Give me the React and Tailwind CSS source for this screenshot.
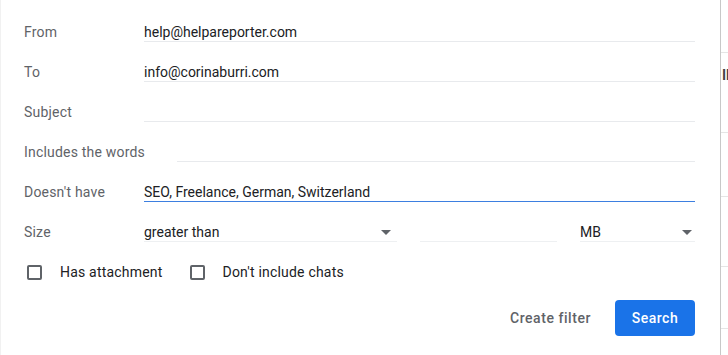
import React from 'react';

const font = { fontFamily: 'Roboto, "Liberation Sans", Arial, sans-serif' };

const Arrow = () => (
  <svg width="10" height="5" viewBox="0 0 10 5" className="shrink-0">
    <path d="M0 0h10L5 5z" fill="#5f6368" />
  </svg>
);

const Field = ({ value, focused }) => (
  <div className="flex flex-1 flex-col pt-[2px]">
    <div className="text-sm leading-[17px] text-[#202124]">{value || '\u00a0'}</div>
    <div className={focused ? 'h-px bg-[#3d7fe0]' : 'h-px bg-[#e8eaed]'} />
  </div>
);

const Row = ({ label, children, wide }) => (
  <div className="flex h-10 items-center">
    <div className={`shrink-0 text-sm leading-5 tracking-[0.2px] text-[#5f6368] ${wide ? 'mr-8' : 'w-[120px]'}`}>{label}</div>
    {children}
  </div>
);

const Checkbox = ({ label }) => (
  <label className="flex items-center">
    <span className="ml-[3px] h-[15px] w-[15px] rounded-[2px] border-2 border-[#5f6368]" />
    <span className="ml-[18px] text-sm tracking-[0.2px] text-[#202124]">{label}</span>
  </label>
);

export default function App() {
  return (
    <div className="flex h-[355px] w-[728px] overflow-hidden bg-white" style={font}>
      <div className="h-full w-[721px] shrink-0 border-l border-r border-l-[#f1f1f1] border-r-[#c8c8c8] pl-[23px] pr-[25px] pt-3">
        <Row label="From">
          <Field value="help@helpareporter.com" />
        </Row>
        <Row label="To">
          <Field value="info@corinaburri.com" />
        </Row>
        <Row label="Subject">
          <Field />
        </Row>
        <Row label="Includes the words" wide>
          <Field />
        </Row>
        <Row label="Doesn't have">
          <Field value="SEO, Freelance, German, Switzerland" focused />
        </Row>
        <Row label="Size">
          <div className="flex w-[253px] items-center justify-between border-b border-[#eef0f2] pt-[2px] pr-[6px] leading-[17px] text-sm text-[#202124]">
            greater than
            <Arrow />
          </div>
          <div className="ml-[23px] w-[137px] border-b border-[#eef0f2] pt-[2px] leading-[17px] text-sm">{'\u00a0'}</div>
          <div className="ml-[23px] flex flex-1 items-center justify-between border-b border-[#eef0f2] pt-[2px] pr-[3px] leading-[17px] text-sm text-[#202124]">
            MB
            <Arrow />
          </div>
        </Row>
        <div className="flex h-10 items-center">
          <Checkbox label="Has attachment" />
          <div className="ml-[24px]">
            <Checkbox label="Don't include chats" />
          </div>
        </div>
        <div className="mt-2 flex items-center justify-end">
          <button className="mr-[24px] text-sm font-medium tracking-[0.55px] text-[#5f6368]">Create filter</button>
          <button className="h-9 w-20 rounded bg-[#1a73e8] text-sm font-medium tracking-[0.5px] text-white">Search</button>
        </div>
      </div>
      <div className="flex h-full flex-1 flex-col bg-white">
        <div className="h-[53px] border-b border-[#e5e5e5]" />
        <div className="flex h-[80px] items-start border-b border-[#e5e5e5] pt-[14px] pl-[1px] text-sm font-bold leading-4 text-[#444]">IN</div>
        <div className="h-[64px] border-b border-[#e5e5e5]" />
        <div className="h-[70px] border-b border-[#e5e5e5]" />
        <div className="h-[62px] border-b border-[#e5e5e5]" />
      </div>
    </div>
  );
}
